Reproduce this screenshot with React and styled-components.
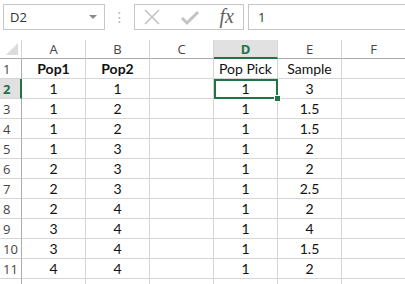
import React from 'react';
import styled, {createGlobalStyle} from 'styled-components';

const GlobalStyle = createGlobalStyle`
  html, body {
    margin: 0;
    padding: 0;
    background: #fff;
    overflow: hidden;
  }
  body {
    font-family: Lato, "Liberation Sans", sans-serif;
  }
`;

const columns = ["A", "B", "C", "D", "E", "F"];
const rows = [
    ["Pop1", "Pop2", "", "Pop Pick", "Sample", ""],
    [1, 1, "", 1, 3, ""],
    [1, 2, "", 1, 1.5, ""],
    [1, 2, "", 1, 1.5, ""],
    [1, 3, "", 1, 2, ""],
    [2, 3, "", 1, 2, ""],
    [2, 3, "", 1, 2.5, ""],
    [2, 4, "", 1, 2, ""],
    [3, 4, "", 1, 4, ""],
    [3, 4, "", 1, 1.5, ""],
    [4, 4, "", 1, 2, ""],
    ["", "", "", "", "", ""],
];
const selCol = 3;
const selRow = 1;

function App() {
    return (
        <Sheet>
            <GlobalStyle/>
            <FormulaBar>
                <NameBox>
                    <span>D2</span>
                    <Caret/>
                </NameBox>
                <Grip>⋮</Grip>
                <Controls>
                    <svg width="18" height="18" viewBox="0 0 18 18">
                        <path d="M2 2 L16 16 M16 2 L2 16" stroke="#c3c3c3" strokeWidth="1.6" fill="none"/>
                    </svg>
                    <svg width="20" height="18" viewBox="0 0 20 18">
                        <path d="M2 10 L7 15 L18 4" stroke="#c3c3c3" strokeWidth="3" fill="none"/>
                    </svg>
                    <Fx>fx</Fx>
                </Controls>
                <FormulaInput>1</FormulaInput>
            </FormulaBar>
            <Grid>
                <Corner><CornerMark/></Corner>
                {columns.map((c, i) => (
                    <ColHeader key={c} selected={i === selCol}>{c}</ColHeader>
                ))}
                {rows.map((row, r) => (
                    <React.Fragment key={r}>
                        {/* last row is only a sliver, its number sits below the window */}
                        <RowHeader selected={r === selRow}>{r < 11 ? r + 1 : ""}</RowHeader>
                        {row.map((v, c) => (
                            <Cell key={c} bold={r === 0 && c < 2} active={r === selRow && c === selCol}>
                                {v}
                                {r === selRow && c === selCol && <Handle/>}
                            </Cell>
                        ))}
                    </React.Fragment>
                ))}
            </Grid>
        </Sheet>
    );
}

const Sheet = styled.div`
  width: 405px;
  height: 284px;
  overflow: hidden;
  background: #fff;
`;

const FormulaBar = styled.div`
  display: flex;
  align-items: center;
  height: 26px;
  padding: 4px 0 0 3px;
  margin-bottom: 10px;
`;

const NameBox = styled.div`
  box-sizing: border-box;
  width: 102px;
  height: 26px;
  border: 1px solid #c6c6c6;
  display: flex;
  align-items: center;
  justify-content: space-between;
  padding: 0 7px 0 6px;
  font-family: "Open Sans", "Liberation Sans", sans-serif;
  font-size: 13px;
  color: #333;
`;

const Caret = styled.span`
  width: 0;
  height: 0;
  border-left: 4px solid transparent;
  border-right: 4px solid transparent;
  border-top: 4px solid #8a8a8a;
`;

const Grip = styled.div`
  width: 29px;
  text-align: center;
  color: #b0b0b0;
  font-size: 14px;
  font-family: "DejaVu Sans", sans-serif;
`;

const Controls = styled.div`
  box-sizing: border-box;
  width: 110px;
  height: 26px;
  border: 1px solid #c6c6c6;
  display: flex;
  align-items: center;
  justify-content: space-between;
  padding: 0 9px 0 8px;
`;

const Fx = styled.span`
  font-family: "Liberation Serif", serif;
  font-style: italic;
  font-size: 20px;
  color: #5f5f5f;
  margin-top: -2px;
`;

const FormulaInput = styled.div`
  box-sizing: border-box;
  flex: 1;
  height: 26px;
  margin-left: 4px;
  border: 1px solid #c6c6c6;
  border-right: none;
  display: flex;
  align-items: center;
  padding-left: 9px;
  font-family: "Open Sans", "Liberation Sans", sans-serif;
  font-size: 13px;
  color: #333;
`;

const Grid = styled.div`
  display: grid;
  grid-template-columns: 22px repeat(6, 64px);
  grid-template-rows: 19px;
  grid-auto-rows: 20px;
`;

const Corner = styled.div`
  position: relative;
  border-right: 1px solid #d5d5d5;
  border-bottom: 1px solid #ababab;
  box-sizing: border-box;
`;

const CornerMark = styled.div`
  position: absolute;
  right: 3px;
  bottom: 3px;
  width: 0;
  height: 0;
  border-left: 12px solid transparent;
  border-bottom: 12px solid #dcdcdc;
`;

const ColHeader = styled.div`
  box-sizing: border-box;
  display: flex;
  align-items: center;
  justify-content: center;
  font-family: "Open Sans", "Liberation Sans", sans-serif;
  font-size: 13px;
  color: ${p => p.selected ? "#217346" : "#444"};
  font-weight: ${p => p.selected ? 700 : 400};
  background: ${p => p.selected ? "#e1e1e1" : "#fff"};
  border-right: 1px solid #d5d5d5;
  border-bottom: ${p => p.selected ? "2px solid #217346" : "1px solid #ababab"};
`;

const RowHeader = styled.div`
  box-sizing: border-box;
  display: flex;
  align-items: center;
  padding-left: 3px;
  font-family: "Open Sans", "Liberation Sans", sans-serif;
  font-size: 13px;
  color: ${p => p.selected ? "#217346" : "#444"};
  font-weight: ${p => p.selected ? 700 : 400};
  background: ${p => p.selected ? "#e1e1e1" : "#fff"};
  border-right: ${p => p.selected ? "2px solid #217346" : "1px solid #ababab"};
  border-bottom: 1px solid #d5d5d5;
`;

const Cell = styled.div`
  position: relative;
  box-sizing: border-box;
  display: flex;
  align-items: center;
  justify-content: center;
  font-size: 14px;
  color: #111;
  font-weight: ${p => p.bold ? 700 : 400};
  border-right: 1px solid #d5d5d5;
  border-bottom: 1px solid #d5d5d5;
  ${p => p.active && `
    outline: 2px solid #217346;
    outline-offset: -2px;
    z-index: 1;
  `}
`;

const Handle = styled.span`
  position: absolute;
  right: -4px;
  bottom: -4px;
  width: 5px;
  height: 5px;
  background: #217346;
  border: 1px solid #fff;
`;

export default App;
